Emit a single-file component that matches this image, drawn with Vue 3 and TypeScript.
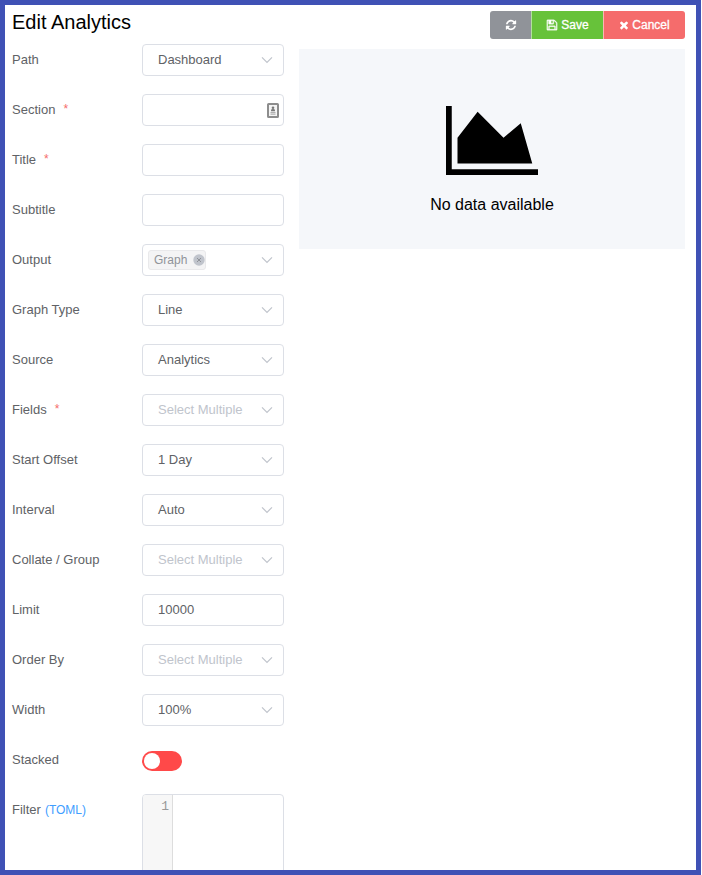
<script setup lang="ts">
interface Field {
  label: string
  kind: 'select' | 'input' | 'tags' | 'switch' | 'code'
  value?: string
  placeholder?: string
  required?: boolean
  autofill?: boolean
  hint?: string
}

const fields: Field[] = [
  { label: 'Path', kind: 'select', value: 'Dashboard' },
  { label: 'Section', kind: 'input', required: true, autofill: true },
  { label: 'Title', kind: 'input', required: true },
  { label: 'Subtitle', kind: 'input' },
  { label: 'Output', kind: 'tags', value: 'Graph' },
  { label: 'Graph Type', kind: 'select', value: 'Line' },
  { label: 'Source', kind: 'select', value: 'Analytics' },
  { label: 'Fields', kind: 'select', placeholder: 'Select Multiple', required: true },
  { label: 'Start Offset', kind: 'select', value: '1 Day' },
  { label: 'Interval', kind: 'select', value: 'Auto' },
  { label: 'Collate / Group', kind: 'select', placeholder: 'Select Multiple' },
  { label: 'Limit', kind: 'input', value: '10000' },
  { label: 'Order By', kind: 'select', placeholder: 'Select Multiple' },
  { label: 'Width', kind: 'select', value: '100%' },
  { label: 'Stacked', kind: 'switch' },
  { label: 'Filter', kind: 'code', hint: '(TOML)' },
]
</script>

<template>
  <div class="frame">
    <header class="header">
      <h1 class="title">Edit Analytics</h1>
      <div class="actions">
        <button class="btn refresh" aria-label="Refresh">
          <svg class="fa" viewBox="0 0 1792 1792"><path d="M1639 1056q0 5-1 7-64 268-268 434.5t-478 166.5q-146 0-282.5-55t-243.5-157l-129 129q-19 19-45 19t-45-19-19-45v-448q0-26 19-45t45-19h448q26 0 45 19t19 45-19 45l-137 137q71 66 161 102t187 36q134 0 250-65t186-179q11-17 53-117 8-23 30-23h192q13 0 22.5 9.5t9.5 22.5zm25-800v448q0 26-19 45t-45 19h-448q-26 0-45-19t-19-45 19-45l138-138q-148-137-349-137-134 0-250 65t-186 179q-11 17-53 117-8 23-30 23h-199q-13 0-22.5-9.5t-9.5-22.5v-7q65-268 270-434.5t480-166.5q146 0 284 55.5t245 156.5l130-129q19-19 45-19t45 19 19 45z" /></svg>
        </button>
        <button class="btn save">
          <svg class="fa" viewBox="0 0 1792 1792"><path d="M512 1536h768v-384h-768v384zm896 0h128v-896q0-14-10-38.5t-20-34.5l-281-281q-10-10-34-20t-39-10v416q0 40-28 68t-68 28h-576q-40 0-68-28t-28-68v-416h-128v1280h128v-416q0-40 28-68t68-28h832q40 0 68 28t28 68v416zm-384-928v-320q0-13-9.5-22.5t-22.5-9.5h-192q-13 0-22.5 9.5t-9.5 22.5v320q0 13 9.5 22.5t22.5 9.5h192q13 0 22.5-9.5t9.5-22.5zm640 32v928q0 40-28 68t-68 28h-1344q-40 0-68-28t-28-68v-1344q0-40 28-68t68-28h928q40 0 88 20t76 48l280 280q28 28 48 76t20 88z" /></svg>
          <span>Save</span>
        </button>
        <button class="btn cancel">
          <svg class="fa" viewBox="0 0 1792 1792"><path d="M1490 1322q0 40-28 68l-136 136q-28 28-68 28t-68-28l-294-294-294 294q-28 28-68 28t-68-28l-136-136q-28-28-28-68t28-68l294-294-294-294q-28-28-28-68t28-68l136-136q28-28 68-28t68 28l294 294 294-294q28-28 68-28t68 28l136 136q28 28 28 68t-28 68l-294 294 294 294q28 28 28 68z" /></svg>
          <span>Cancel</span>
        </button>
      </div>
    </header>

    <main class="content">
      <form class="form">
        <div v-for="field in fields" :key="field.label" class="row">
          <label class="label">
            <span>{{ field.label }}</span>
            <span v-if="field.required" class="star">*</span>
            <span v-if="field.hint" class="hint">{{ field.hint }}</span>
          </label>

          <div v-if="field.kind === 'switch'" class="switch"><span class="knob"></span></div>

          <div v-else-if="field.kind === 'code'" class="code">
            <div class="gutter">1</div>
          </div>

          <div v-else class="control" :class="field.kind">
            <span v-if="field.kind === 'tags'" class="tag">
              <span>{{ field.value }}</span>
              <svg class="close" viewBox="0 0 12 12"><circle cx="6" cy="6" r="5.7" fill="#c0c4cc" /><path d="M4 4l4 4M8 4L4 8" stroke="#909399" stroke-width="1" /></svg>
            </span>
            <span v-else class="value" :class="{ placeholder: !field.value }">{{ field.value ?? field.placeholder }}</span>
            <svg v-if="field.autofill" class="autofill" viewBox="0 0 12 15">
              <rect x="1" y="1" width="10" height="13" rx="0.6" fill="#f5f5f5" stroke="#8d8d8d" stroke-width="2" />
              <circle cx="6" cy="4.7" r="1.3" fill="#777" />
              <path d="M4 8.2V7.2Q4 6 6 6T8 7.2V8.2z" fill="#777" />
              <path d="M3.5 9.5h5M3.5 11.1h5" stroke="#b0b0b0" stroke-width="1.2" />
            </svg>
            <svg v-if="field.kind !== 'input'" class="chevron" viewBox="0 0 12 8"><path d="M1 1.3l5 5 5-5" /></svg>
          </div>
        </div>
      </form>

      <section class="preview">
        <svg class="chart" viewBox="0 0 2048 1536"><path d="M2048 1408v128H0V0h128v1408zM1664 384l256 896H256V704l448-576 576 576z" /></svg>
        <p class="empty">No data available</p>
      </section>
    </main>
  </div>
</template>

<style>
body {
  margin: 0;
  background: #fff;
  overflow: hidden;
}
</style>

<style scoped>
* {
  box-sizing: border-box;
}

.frame {
  width: 701px;
  height: 875px;
  border: 5px solid #3f51b5;
  overflow: hidden;
  background: #fff;
  font-family: "Liberation Sans", Arial, sans-serif;
}

.header {
  display: flex;
  justify-content: space-between;
  height: 39px;
  padding: 6px 11px 0 7px;
}

.title {
  margin: 0;
  font-size: 20px;
  line-height: 23px;
  font-weight: 400;
  color: #000;
}

.actions {
  display: flex;
  width: 195px;
  height: 28px;
  border-radius: 3px;
  overflow: hidden;
}

.btn {
  display: flex;
  align-items: center;
  justify-content: center;
  gap: 3px;
  padding: 0 0 1px;
  border: 0;
  color: #fff;
  font-family: "Liberation Sans", Arial, sans-serif;
  font-size: 12px;
  line-height: 28px;
  -webkit-text-stroke: 0.3px #fff;
}

.refresh {
  width: 41px;
  background: #909399;
}

.save {
  width: 72px;
  border-left: 1px solid #b3e19d;
  background: #67c23a;
}

.cancel {
  width: 82px;
  padding-right: 1px;
  gap: 2px;
  border-left: 1px solid #fab6b6;
  background: #f56c6c;
}

.fa {
  width: 12px;
  height: 12px;
  fill: currentColor;
}

.save .fa,
.cancel .fa {
  margin-top: 1px;
}

.save .fa {
  stroke: currentColor;
  stroke-width: 50;
}

.content {
  display: flex;
  align-items: flex-start;
  padding-left: 7px;
}

.form {
  width: 272px;
}

.row {
  display: grid;
  grid-template-columns: 130px 142px;
  height: 50px;
}

.label {
  display: flex;
  height: 32px;
  font-size: 13px;
  line-height: 31px;
  color: #606266;
}

.star {
  margin-left: 8px;
  font-size: 12px;
  color: #f56c6c;
}

.hint {
  margin-left: 4px;
  font-size: 12px;
  line-height: 33px;
  color: #409eff;
}

.control {
  display: flex;
  align-items: center;
  height: 32px;
  padding: 0 10px 0 15px;
  border: 1px solid #dcdfe6;
  border-radius: 4px;
  font-size: 13px;
  line-height: 30px;
  color: #606266;
}

.control.tags {
  padding-left: 5px;
}

.value {
  flex: 1;
  height: 31px;
  white-space: nowrap;
}

.placeholder {
  color: #c0c4cc;
}

.chevron {
  width: 12px;
  height: 8px;
  fill: none;
  stroke: #c0c4cc;
  stroke-width: 1.2;
}

.autofill {
  width: 12px;
  height: 15px;
  margin-right: -6px;
}

.tag {
  display: flex;
  align-items: center;
  gap: 6px;
  width: 58px;
  height: 20px;
  margin-right: auto;
  padding-left: 5px;
  border: 1px solid #e9e9eb;
  border-radius: 3px;
  background: #f4f4f5;
  font-size: 12px;
  line-height: 18px;
  color: #909399;
}

.close {
  width: 12px;
  height: 12px;
  flex: none;
}

.switch {
  width: 40px;
  height: 20px;
  margin-top: 7px;
  padding: 2px;
  border-radius: 10px;
  background: #ff4949;
}

.knob {
  display: block;
  width: 16px;
  height: 16px;
  border-radius: 50%;
  background: #fff;
}

.code {
  height: 100px;
  border: 1px solid #dcdfe6;
  border-radius: 4px;
  overflow: hidden;
}

.gutter {
  width: 30px;
  height: 100%;
  padding: 4px 3px 0 0;
  border-right: 1px solid #ddd;
  background: #f7f7f7;
  font-family: "Liberation Mono", monospace;
  font-size: 13px;
  line-height: 15px;
  text-align: right;
  color: #999;
}

.preview {
  display: flex;
  flex-direction: column;
  align-items: center;
  width: 386px;
  height: 200px;
  margin: 5px 0 0 15px;
  padding-top: 57px;
  background: #f5f7fa;
}

.chart {
  width: 92px;
  height: 69px;
  fill: #000;
}

.empty {
  margin: 21px 0 0;
  font-size: 16px;
  line-height: 18px;
  color: #000;
}
</style>
